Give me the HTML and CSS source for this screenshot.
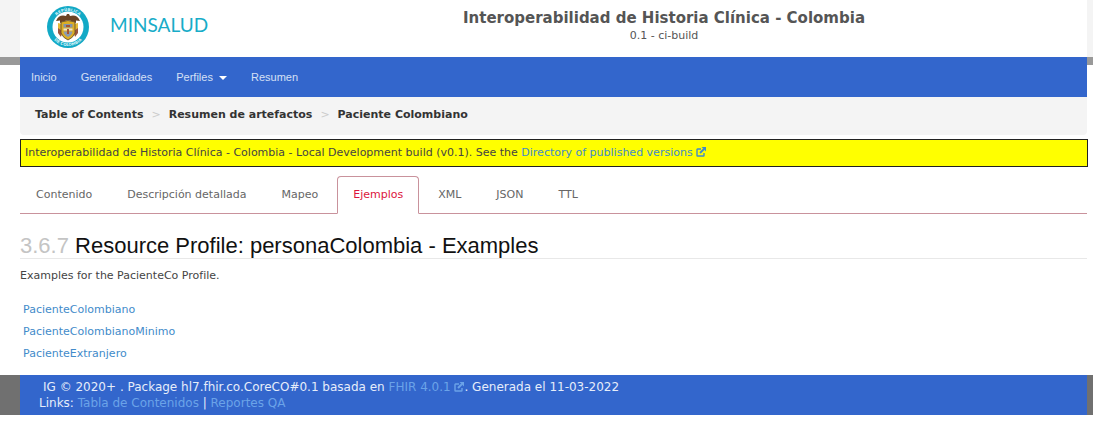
FILE: index.html
```html
<!DOCTYPE html>
<html lang="es">
<head>
<meta charset="utf-8">
<title>Interoperabilidad de Historia Clínica - Colombia</title>
<link rel="stylesheet" href="styles.css">
</head>
<body>
<svg class="defs" aria-hidden="true">
  <symbol id="external" viewBox="0 0 10 10">
    <path d="M5 2H1.500Q1 2 1 2.500V8.500Q1 9 1.500 9H7.500Q8 9 8 8.500V6" fill="none" stroke="currentColor" stroke-width="1.400"/>
    <path d="M4 6L8 2" fill="none" stroke="currentColor" stroke-width="2"/>
    <path d="M5.500 0H10V4.500Z" fill="currentColor"/>
  </symbol>
</svg>
<header class="band">
  <div class="container masthead">
    <a class="brand" href="#">
      <svg class="seal" viewBox="0 0 42 42" aria-hidden="true">
        <defs>
          <path id="arc-top" d="M5 21A16 16 0 0 1 37 21"/>
          <path id="arc-bottom" d="M2 21A19 19 0 0 0 40 21"/>
        </defs>
        <circle cx="21" cy="21" r="21" fill="#12a9c6"/>
        <circle cx="21" cy="21" r="15.500" fill="#fff"/>
        <text class="seal-text"><textPath href="#arc-top" startOffset="50%" text-anchor="middle">REPÚBLICA</textPath></text>
        <text class="seal-text"><textPath href="#arc-bottom" startOffset="50%" text-anchor="middle">DE COLOMBIA</textPath></text>
        <path d="M9 15Q12 8 19 10L20 8H22L23 10Q30 8 33 15L29 14.500L29 17L26 15.500L21 14L16 15.500L13 17L13 14.500Z" fill="#6b4423"/>
        <path d="M11 17L15 18V30L11 26Z" fill="#e5bb35"/>
        <path d="M31 17L27 18V30L31 26Z" fill="#e5bb35"/>
        <path d="M11 22L15 25L14 31L11 27ZM31 22L27 25L28 31L31 27Z" fill="#9a5540"/>
        <path d="M14 16Q21 13 28 16V27Q26 32 21 34Q16 32 14 27Z" fill="#dcae25" stroke="#5b452b" stroke-width="0.800"/>
        <path d="M16.500 18H25.500V21.500H16.500Z" fill="#8295ad"/>
        <path d="M16.500 22.500H25.500V24.500H16.500Z" fill="#eee5d0"/>
        <path d="M16.500 25.500H25.500Q25 29 21 31Q17 29 16.500 25.500Z" fill="#8b9bb0"/>
        <path d="M19 19H23V21H19ZM20 23H22V28H20Z" fill="#a65532"/>
      </svg>
      <span class="brand-name">MINSALUD</span>
    </a>
    <div class="title-block">
      <div class="site-title">Interoperabilidad de Historia Clínica - Colombia</div>
      <div class="version">0.1 - ci-build</div>
    </div>
  </div>
</header>
<nav class="container navbar">
  <a href="#">Inicio</a>
  <a href="#">Generalidades</a>
  <a href="#">Perfiles <span class="caret"></span></a>
  <a href="#">Resumen</a>
</nav>
<main class="container">
  <nav class="breadcrumb">
    <a href="#">Table of Contents</a><span class="sep">&gt;</span><a href="#">Resumen de artefactos</a><span class="sep">&gt;</span><a href="#">Paciente Colombiano</a>
  </nav>
  <p class="notice">Interoperabilidad de Historia Clínica - Colombia - Local Development build (v0.1). See the <a href="#">Directory of published versions <svg class="ext"><use href="#external"/></svg></a></p>
  <nav class="tabs">
    <a href="#">Contenido</a>
    <a href="#">Descripción detallada</a>
    <a href="#">Mapeo</a>
    <a href="#" class="active">Ejemplos</a>
    <a href="#">XML</a>
    <a href="#">JSON</a>
    <a href="#">TTL</a>
  </nav>
  <h2 class="heading"><span class="number">3.6.7</span> Resource Profile: personaColombia - Examples</h2>
  <p class="intro">Examples for the PacienteCo Profile.</p>
  <ul class="examples">
    <li><a href="#">PacienteColombiano</a></li>
    <li><a href="#">PacienteColombianoMinimo</a></li>
    <li><a href="#">PacienteExtranjero</a></li>
  </ul>
</main>
<footer class="footer">
  <div class="container footer-inner">
    <p class="package">IG © 2020+ . Package hl7.fhir.co.CoreCO#0.1 basada en <a href="#">FHIR 4.0.1 <svg class="ext"><use href="#external"/></svg></a>. Generada el 11-03-2022</p>
    <p>Links: <a href="#">Tabla de Contenidos</a> | <a href="#">Reportes QA</a></p>
  </div>
</footer>
</body>
</html>
```
FILE: styles.css
```css
* { box-sizing: border-box; }
body {
  margin: 0;
  padding-right: 6px;
  background: #fff;
  color: #444;
  font: 11px/16px "DejaVu Sans", Verdana, sans-serif;
}
a { color: #428bca; text-decoration: none; }
p { margin: 0; }
.defs { display: none; }
.container { margin: 0 6px 0 20px; }
.ext { width: 10px; height: 10px; vertical-align: -1px; }

.band { background: #f4f4f4; border-bottom: 8px solid #999; }
.masthead {
  display: grid;
  grid-template-columns: 330px 1fr;
  align-items: start;
  height: 57px;
  background: #fff;
}
.brand { display: flex; align-items: center; gap: 21px; padding: 6px 0 0 27px; }
.seal { width: 42px; height: 42px; }
.seal-text { font: bold 4px "DejaVu Sans", sans-serif; fill: #d8f3f8; }
.brand-name { padding-bottom: 4px; font: 19px/24px Lato, sans-serif; color: #18acc8; }
.title-block { width: 628px; padding-top: 9px; text-align: center; color: #555; }
.site-title { font-size: 15px; line-height: 18px; font-weight: bold; }
.version { line-height: 18px; }

.navbar {
  position: relative;
  display: flex;
  gap: 24px;
  margin-top: -8px;
  padding: 12px 11px;
  background: #36c;
  font-family: "Liberation Sans", Arial, sans-serif;
}
.navbar a { color: #d6e0f5; }
.caret {
  display: inline-block;
  margin-left: 3px;
  border: 4px solid transparent;
  border-top-color: #fff;
  border-bottom: 0;
  vertical-align: 1px;
}

.breadcrumb {
  padding: 10px 15px 12px;
  border-radius: 0 0 4px 4px;
  background: #f4f4f4;
  font-weight: bold;
}
.breadcrumb a { color: #333; }
.sep { margin: 0 8px; color: #ccc; font-weight: normal; }

.notice {
  margin: 4px -1px 9px 0;
  padding: 5px 4px;
  border: 1px solid #222;
  background: #ff0;
}
.tabs { display: flex; gap: 3px; border-bottom: 1px solid #c9929c; }
.tabs a {
  margin-bottom: -1px;
  padding: 10px 15px;
  border: 1px solid transparent;
  border-radius: 4px 4px 0 0;
  color: #666;
}
.tabs .active { border-color: #c9929c #c9929c #fff; background: #fff; color: #dc143c; }

.heading {
  margin: 19px 0 9px;
  border-bottom: 1px solid #e8e8e8;
  color: #111;
  font: 22px/25px "Liberation Sans", Arial, sans-serif;
}
.number { color: #c4c4c4; }
.examples { margin: 15px 0 0; padding: 0 3px 10px; list-style: none; line-height: 22px; }

.footer { background: #707070; }
.footer-inner { padding: 4px 19px; background: #36c; color: #e6edfa; font-size: 12px; }
.footer a { color: #6ba3e8; }
.package { padding-left: 4px; }
```
